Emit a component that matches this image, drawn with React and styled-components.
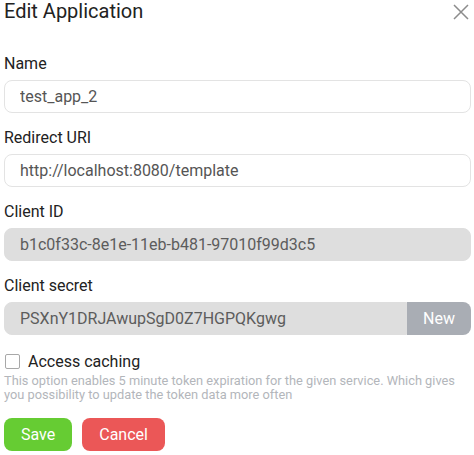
import React, { useState } from "react";
import styled, { createGlobalStyle } from "styled-components";

const GlobalStyle = createGlobalStyle`
  body {
    margin: 0;
    background: #ffffff;
    font-family: Roboto, "Liberation Sans", sans-serif;
  }
`;

const Wrapper = styled.div`
  padding: 0 3px 0 4px;
  width: 467px;
`;

const Header = styled.div`
  display: flex;
  justify-content: space-between;
  align-items: flex-start;
`;

const Title = styled.h2`
  margin: 0;
  font-size: 20px;
  font-weight: 400;
  line-height: 22px;
  color: #222;
`;

const CloseButton = styled.button`
  margin: 4px 2px 0 0;
  padding: 0;
  border: none;
  background: none;
  width: 16px;
  height: 16px;
  display: flex;
  cursor: pointer;
`;

const Form = styled.form`
  margin-top: 32px;
  display: flex;
  flex-direction: column;
`;

const Field = styled.div`
  display: flex;
  flex-direction: column;
  margin-bottom: 15px;
`;

const Label = styled.label`
  font-size: 16px;
  line-height: 19px;
  color: #222;
  margin-bottom: 7px;
`;

const InputGroup = styled.div`
  display: flex;
  height: 33px;
`;

const Input = styled.input`
  box-sizing: border-box;
  flex: 1;
  min-width: 0;
  height: 33px;
  padding: 0 15px;
  font-family: Roboto, "Liberation Sans", sans-serif;
  font-size: 16px;
  color: #555;
  background: ${(p) => (p.disabled ? "#dedede" : "#fff")};
  border: 1px solid ${(p) => (p.disabled ? "#dedede" : "#e3e3e3")};
  border-radius: ${(p) => (p.$attached ? "8px 0 0 8px" : "8px")};
  outline: none;
  &:disabled {
    -webkit-text-fill-color: #5c5c5c;
    opacity: 1;
  }
`;

const NewButton = styled.button`
  height: 33px;
  padding: 0 16px;
  border: none;
  border-radius: 0 8px 8px 0;
  background: #a9adb4;
  color: #fff;
  font-family: Roboto, "Liberation Sans", sans-serif;
  font-size: 16px;
`;

const CheckRow = styled.label`
  margin-top: 2px;
  display: flex;
  align-items: center;
  gap: 8px;
  font-size: 16px;
  line-height: 19px;
  color: #222;
`;

const Box = styled.span`
  box-sizing: border-box;
  margin-left: 1px;
  width: 15px;
  height: 15px;
  border: 1px solid #a8a8a8;
  border-radius: 2px;
  background: #fff;
`;

const Help = styled.p`
  margin: 3px 0 0;
  font-size: 12.8px;
  line-height: 14px;
  color: #b3b6bb;
`;

const Actions = styled.div`
  margin-top: 16px;
  display: flex;
  gap: 10px;
`;

const ActionButton = styled.button`
  height: 33px;
  padding: 0 17px;
  border: none;
  border-radius: 8px;
  background: ${(p) => p.$bg};
  color: #fff;
  font-family: Roboto, "Liberation Sans", sans-serif;
  font-size: 16px;
  cursor: pointer;
`;

const CloseIcon = () => (
  <svg width="16" height="16" viewBox="0 0 16 16">
    <path d="M1 1L15 15M15 1L1 15" stroke="#8c8c8c" strokeWidth="1.5" fill="none" />
  </svg>
);

export default function App() {
  const [name, setName] = useState("test_app_2");
  const [uri, setUri] = useState("http://localhost:8080/template");

  return (
    <>
      <GlobalStyle />
      <Wrapper>
        <Header>
          <Title>Edit Application</Title>
          <CloseButton aria-label="Close">
            <CloseIcon />
          </CloseButton>
        </Header>
        <Form onSubmit={(e) => e.preventDefault()}>
          <Field>
            <Label>Name</Label>
            <InputGroup>
              <Input value={name} onChange={(e) => setName(e.target.value)} />
            </InputGroup>
          </Field>
          <Field>
            <Label>Redirect URI</Label>
            <InputGroup>
              <Input value={uri} onChange={(e) => setUri(e.target.value)} />
            </InputGroup>
          </Field>
          <Field>
            <Label>Client ID</Label>
            <InputGroup>
              <Input disabled value="b1c0f33c-8e1e-11eb-b481-97010f99d3c5" />
            </InputGroup>
          </Field>
          <Field>
            <Label>Client secret</Label>
            <InputGroup>
              <Input $attached disabled value="PSXnY1DRJAwupSgD0Z7HGPQKgwg" />
              <NewButton type="button">New</NewButton>
            </InputGroup>
          </Field>
          <CheckRow>
            <Box />
            Access caching
          </CheckRow>
          <Help>
            This option enables 5 minute token expiration for the given service. Which gives
            you possibility to update the token data more often
          </Help>
          <Actions>
            <ActionButton $bg="#66cc33">Save</ActionButton>
            <ActionButton type="button" $bg="#eb5757">Cancel</ActionButton>
          </Actions>
        </Form>
      </Wrapper>
    </>
  );
}
